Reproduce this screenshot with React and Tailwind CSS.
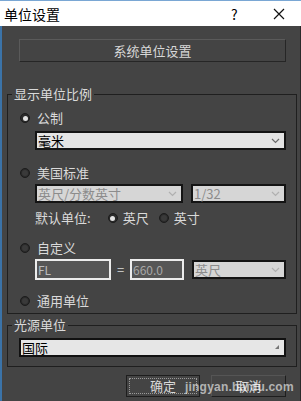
import React from "react";

const FONT = {
  fontFamily: '"Microsoft YaHei", "Noto Sans CJK SC", "Liberation Sans", sans-serif',
};

function Chevron({ color = "#7a7a7a" }) {
  return (
    <svg width="9" height="6" viewBox="0 0 9 6" className="shrink-0">
      <polyline points="1,1 4.5,4.5 8,1" fill="none" stroke={color} strokeWidth="1.2" />
    </svg>
  );
}

// radio dot, the checked ones have a light centre
function Radio({ checked }) {
  return (
    <span className="w-[10px] h-[10px] rounded-full bg-[#2b2b2b] border border-[#1c1c1c] flex items-center justify-center shrink-0">
      {checked ? (
        <span className="w-[5px] h-[5px] rounded-full bg-[#e2e2e2]" />
      ) : (
        <span className="w-[6px] h-[6px] rounded-full bg-[#3a3a3a]" />
      )}
    </span>
  );
}

function Select({ value, disabled, className = "" }) {
  return (
    <div
      className={`h-[19px] border-2 border-[#141414] flex items-center justify-between pl-[1px] pr-[4px] ${
        disabled ? "bg-[#d6d6d6] text-[#8c8c8c]" : "bg-[#e4e4e4] text-black"
      } ${className}`}
    >
      <span className="text-[13px] leading-[15px]">{value}</span>
      <Chevron color={disabled ? "#b0b0b0" : "#6a6a6a"} />
    </div>
  );
}

export default function App() {
  return (
    <div className="w-[301px] h-[401px] flex flex-col overflow-hidden" style={FONT}>
      {/* Title bar */}
      <div className="h-[26px] bg-white border-t border-[#7aa7d4] flex items-center pl-[4px] shrink-0">
        <span className="text-[14px] leading-[16px] text-black">单位设置</span>
        <span className="ml-auto text-[14px] leading-[16px] text-black w-[10px] mr-[32px]">?</span>
        <svg width="12" height="12" viewBox="0 0 12 12" className="mr-[16px]">
          <path d="M1 1 L11 11 M11 1 L1 11" stroke="#111" strokeWidth="1.2" />
        </svg>
      </div>

      {/* Body */}
      <div className="flex-1 bg-[#444444] border-l-2 border-[#3b73a8] border-r border-r-[#2a2a2a] pl-[5px] pr-[3px] flex flex-col relative text-[#dadada]">
        <button className="mt-[13px] ml-[12px] mr-[11px] h-[23px] border border-[#262626] border-t-[#5a5a5a] border-l-[#5a5a5a] text-[13px] text-[#d8d8d8] flex items-center justify-center">
          系统单位设置
        </button>

        {/* Display unit scale */}
        <fieldset className="mt-[24px] border border-[#1f1f1f] pl-[12px] pr-[10px] pt-[8px] pb-[4px]">
          <legend className="-ml-[8px] px-[2px] text-[13px] leading-[16px] text-[#dadada]">显示单位比例</legend>

          <div className="h-[16px] flex items-center">
            <Radio checked />
            <span className="ml-[7px] text-[13px] leading-[16px]">公制</span>
          </div>
          <Select value="毫米" className="mt-[5px] ml-[15px]" />

          <div className="mt-[15px] h-[16px] flex items-center">
            <Radio />
            <span className="ml-[7px] text-[13px] leading-[16px]">美国标准</span>
          </div>
          <div className="mt-[3px] ml-[15px] flex gap-[8px]">
            <Select value="英尺/分数英寸" disabled className="w-[148px]" />
            <Select value="1/32" disabled className="flex-1" />
          </div>

          <div className="mt-[7px] ml-[15px] h-[16px] flex items-center text-[13px] leading-[16px]">
            <span>默认单位:</span>
            <span className="ml-[17px]"><Radio checked /></span>
            <span className="ml-[5px]">英尺</span>
            <span className="ml-[10px]"><Radio /></span>
            <span className="ml-[5px]">英寸</span>
          </div>

          <div className="mt-[14px] h-[16px] flex items-center">
            <Radio />
            <span className="ml-[7px] text-[13px] leading-[16px]">自定义</span>
          </div>
          <div className="mt-[3px] ml-[15px] flex items-center">
            <div className="w-[76px] h-[21px] border-2 border-[#ececec] bg-[#565656] text-[12px] leading-[17px] text-[#bcbcbc] pl-[1px]">FL</div>
            <span className="w-[19px] text-center text-[13px]">=</span>
            <div className="w-[54px] h-[21px] border-2 border-[#ececec] bg-[#565656] text-[12px] leading-[17px] text-[#a8a8a8] pl-[1px]">660.0</div>
            <Select value="英尺" disabled className="ml-[8px] flex-1" />
          </div>

          <div className="mt-[13px] h-[16px] flex items-center">
            <Radio />
            <span className="ml-[7px] text-[13px] leading-[16px]">通用单位</span>
          </div>
        </fieldset>

        {/* Lighting units */}
        <fieldset className="mt-[3px] border border-[#1f1f1f] pl-[11px] pr-[10px] pt-[5px] pb-[9px]">
          <legend className="-ml-[7px] px-[2px] text-[13px] leading-[16px] text-[#dadada]">光源单位</legend>
          <div className="h-[19px] border-2 border-[#111] bg-[#e6e6e6] flex items-center justify-between pl-[1px] pr-[4px]">
            <span className="text-[13px] leading-[15px] text-black">国际</span>
            <svg width="5" height="5" viewBox="0 0 5 5">
              <path d="M4 0 L4 4 L0 4 Z" fill="#777" />
            </svg>
          </div>
        </fieldset>

        <div className="mt-[8px] mr-[11px] flex justify-end gap-[11px]">
          <button className="w-[74px] h-[22px] border border-[#1e1e1e] p-[2px]">
            <span className="w-full h-full border border-dotted border-[#9a9a9a] flex items-center justify-center text-[13px] text-[#d8d8d8]">
              确定
            </span>
          </button>
          <button className="w-[75px] h-[22px] border border-[#1e1e1e] border-t-[#555] border-l-[#555] flex items-center justify-center text-[13px] text-[#d8d8d8]">
            取消
          </button>
        </div>

        {/* watermark */}
        <span
          className="absolute left-[183px] top-[352px] text-[12px] font-bold text-white/60 tracking-[0.2px] pointer-events-none"
          style={{ fontFamily: '"Liberation Sans", sans-serif' }}
        >
          jingyan.baidu.com
        </span>
      </div>
    </div>
  );
}
